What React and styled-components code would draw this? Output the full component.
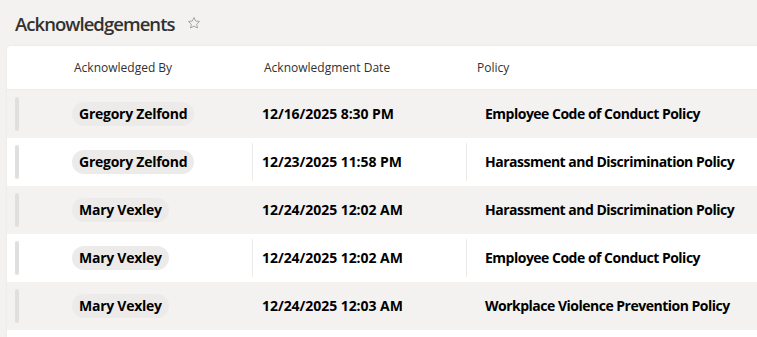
import React from "react";
import styled, { createGlobalStyle } from "styled-components";

const Global = createGlobalStyle`
  html, body { margin: 0; padding: 0; background: #f3f2f1; }
  body { font-family: "Open Sans", "Noto Sans", sans-serif; color: #323130; overflow: hidden; }
`;

const Page = styled.div`
  width: 757px;
  height: 337px;
  background: #f3f2f1;
  overflow: hidden;
`;

const TitleBar = styled.div`
  display: flex;
  align-items: center;
  gap: 12px;
  height: 46px;
  padding-left: 15px;
  box-sizing: border-box;
`;

const Title = styled.h1`
  margin: 0;
  font-size: 18.5px;
  font-weight: 600;
  letter-spacing: -0.95px;
  color: #323130;
`;

const Card = styled.div`
  margin-left: 7px;
  width: 780px;
  background: #fff;
  border-radius: 4px 0 0 0;
  box-shadow: 0 0 2px rgba(0,0,0,0.08);
  height: 300px;
`;

const Grid = styled.div`
  display: grid;
  grid-template-columns: 58px 187px 214px 1fr;
`;

const HeadCell = styled.div`
  height: 44px;
  display: flex;
  align-items: center;
  padding-left: ${p => p.$pad}px;
  font-size: 12px;
  color: #323130;
  border-bottom: 1px solid #edebe9;
  box-sizing: border-box;
`;

const Cell = styled.div`
  height: 48px;
  display: flex;
  align-items: center;
  box-sizing: border-box;
  background: ${p => (p.$alt ? "#f3f2f1" : "#ffffff")};
  padding-left: ${p => p.$pad}px;
  padding-bottom: 1px;
  position: relative;
  font-size: 14px;
  font-weight: 700;
  color: #000;
  white-space: nowrap;
  letter-spacing: ${p => p.$ls ?? -0.25}px;
  &::before {
    content: "";
    display: ${p => (p.$divider ? "block" : "none")};
    position: absolute;
    left: 0;
    top: 5px;
    bottom: 5px;
    width: 1px;
    background: ${p => (p.$alt ? "transparent" : "#edebe9")};
  }
`;

const Handle = styled.span`
  width: 4px;
  height: 34px;
  border-radius: 2px;
  background: #e1dfdd;
`;

const Pill = styled.span`
  display: inline-flex;
  align-items: center;
  height: 24px;
  padding: 0 7px;
  border-radius: 12px;
  background: #edebe9;
`;

const StarIcon = () => (
  <svg width="14" height="14" viewBox="0 0 24 24" fill="none" stroke="#a19f9d" strokeWidth="1.6" strokeLinejoin="round">
    <path d="M12 2.5l2.9 6.1 6.6.8-4.9 4.6 1.3 6.6L12 17.3l-5.9 3.3 1.3-6.6-4.9-4.6 6.6-.8z" />
  </svg>
);

const rows = [
  ["Gregory Zelfond", "12/16/2025 8:30 PM", "Employee Code of Conduct Policy"],
  ["Gregory Zelfond", "12/23/2025 11:58 PM", "Harassment and Discrimination Policy"],
  ["Mary Vexley", "12/24/2025 12:02 AM", "Harassment and Discrimination Policy"],
  ["Mary Vexley", "12/24/2025 12:02 AM", "Employee Code of Conduct Policy"],
  ["Mary Vexley", "12/24/2025 12:03 AM", "Workplace Violence Prevention Policy"],
];

export default function App() {
  return (
    <Page>
      <Global />
      <TitleBar>
        <Title>Acknowledgements</Title>
        <StarIcon />
      </TitleBar>
      <Card>
        <Grid>
          <HeadCell $pad={0} />
          <HeadCell $pad={9}>Acknowledged By</HeadCell>
          <HeadCell $pad={12}>Acknowledgment Date</HeadCell>
          <HeadCell $pad={11}>Policy</HeadCell>
          {rows.map((r, i) => {
            const alt = i % 2 === 0;
            return (
              <React.Fragment key={i}>
                <Cell $alt={alt} $pad={8}><Handle /></Cell>
                <Cell $alt={alt} $pad={7}><Pill>{r[0]}</Pill></Cell>
                <Cell $alt={alt} $pad={10} $ls={-0.05} $divider>{r[1]}</Cell>
                <Cell $alt={alt} $pad={19} $ls={-0.5} $divider>{r[2]}</Cell>
              </React.Fragment>
            );
          })}
        </Grid>
      </Card>
    </Page>
  );
}
